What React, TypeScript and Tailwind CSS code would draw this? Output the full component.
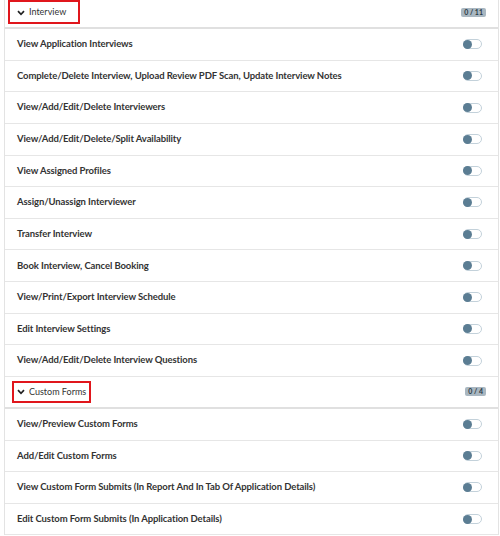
import React from "react";

const interview = [
  "View Application Interviews",
  "Complete/Delete Interview, Upload Review PDF Scan, Update Interview Notes",
  "View/Add/Edit/Delete Interviewers",
  "View/Add/Edit/Delete/Split Availability",
  "View Assigned Profiles",
  "Assign/Unassign Interviewer",
  "Transfer Interview",
  "Book Interview, Cancel Booking",
  "View/Print/Export Interview Schedule",
  "Edit Interview Settings",
  "View/Add/Edit/Delete Interview Questions",
];

const forms = [
  "View/Preview Custom Forms",
  "Add/Edit Custom Forms",
  "View Custom Form Submits (In Report And In Tab Of Application Details)",
  "Edit Custom Form Submits (In Application Details)",
];

function Toggle() {
  return (
    <div className="flex h-[10px] w-[19px] items-center rounded-full border border-[#c3d1da] bg-white">
      <div className="-ml-px h-[9px] w-[9px] rounded-full bg-[#5b7d93]" />
    </div>
  );
}

function Header({ title, count, boxClass }: { title: string; count: string; boxClass: string }) {
  return (
    <div className="relative flex h-[32px] items-center justify-between border-b-2 border-[#e0e0e0] pl-[12px] pr-[12px]">
      <div className="flex items-center gap-[4px] text-[9px] text-[#333]">
        <svg width="8" height="6" viewBox="0 0 8 6" className="mt-px">
          <path d="M1 1.2 L4 4.3 L7 1.2" fill="none" stroke="#222" strokeWidth="1.7" />
        </svg>
        <span>{title}</span>
      </div>
      <div className="flex h-[9px] items-center rounded-[2px] bg-[#a9b7c1] px-[3px] text-[7px] font-bold leading-none text-[#2c3a44]">
        {count}
      </div>
      <div className={"pointer-events-none absolute border-2 border-[#e0161c] " + boxClass} />
    </div>
  );
}

function Row({ label }: { label: string }) {
  return (
    <div className="flex h-[31.64px] items-center justify-between border-b border-[#e6e6e6] pl-[12px] pr-[16px]">
      <span className="text-[9.5px] font-bold tracking-[-0.1px] text-[#333]">{label}</span>
      <Toggle />
    </div>
  );
}

export default function App() {
  return (
    <div
      className="h-[536px] w-[500px] overflow-hidden bg-white"
      style={{ fontFamily: 'Lato, "Noto Sans", sans-serif' }}
    >
      <div className="ml-[4px] -mt-[3px] w-[495px] border-x border-[#e3e3e3]">
        <Header title="Interview" count="0 / 11" boxClass="left-[3px] top-[3px] h-[24px] w-[72px]" />
        {interview.map((l) => (
          <Row key={l} label={l} />
        ))}
        <Header title="Custom Forms" count="0 / 4" boxClass="left-[7px] top-[4px] h-[22px] w-[79px]" />
        {forms.map((l) => (
          <Row key={l} label={l} />
        ))}
      </div>
    </div>
  );
}
